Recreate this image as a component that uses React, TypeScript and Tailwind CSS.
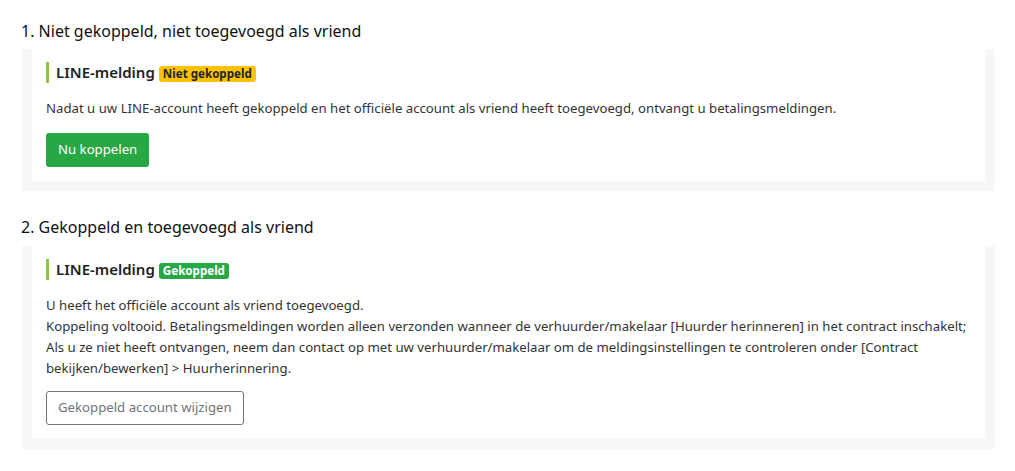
import React from "react";

const font = { fontFamily: '"Segoe UI", "Noto Sans", sans-serif' };

function Heading({ badge, variant }: { badge: string; variant: "warn" | "ok" }) {
  return (
    <div className="flex items-center h-[21px] border-l-[3px] border-[#8dc63f] pl-[7px]">
      <span className="text-[15px] font-semibold text-[#222]">LINE-melding</span>
      <span
        className={
          "ml-[4px] mt-[2px] rounded-[3px] px-[4px] h-[16px] leading-[16px] text-[11.6px] font-bold " +
          (variant === "warn" ? "bg-[#ffc107] text-[#212529]" : "bg-[#28a745] text-white")
        }
      >
        {badge}
      </span>
    </div>
  );
}

export default function App() {
  return (
    <div className="bg-white w-[1015px] h-[471px] pl-[21px] pr-[20px] pt-[19px] text-[#222]" style={font}>
      <h2 className="text-[16px] leading-[24px] text-[#111] mb-[6px]">1. Niet gekoppeld, niet toegevoegd als vriend</h2>
      <div className="bg-[#f7f7f7] pl-[10px] pr-[10px] pb-[10px] ml-px mt-px">
        <div className="bg-white pl-[14px] pt-[13px] pb-[14px]">
          <Heading badge="Niet gekoppeld" variant="warn" />
          <p className="text-[13.2px] leading-[21px] mt-[15px] text-[#333]">
            Nadat u uw LINE-account heeft gekoppeld en het officiële account als vriend heeft toegevoegd, ontvangt u betalingsmeldingen.
          </p>
          <button className="mt-[14px] h-[34px] px-[12px] rounded-[3px] bg-[#28a745] text-white text-[13.2px]">
            Nu koppelen
          </button>
        </div>
      </div>

      <h2 className="text-[16px] leading-[24px] text-[#111] mt-[24px] mb-[7px]">2. Gekoppeld en toegevoegd als vriend</h2>
      <div className="bg-[#f7f7f7] pl-[10px] pr-[10px] pb-[10px] ml-px">
        <div className="bg-white pl-[14px] pt-[13px] pb-[14px]">
          <Heading badge="Gekoppeld" variant="ok" />
          <div className="text-[13.2px] leading-[21px] mt-[15px] text-[#333]">
            <p>U heeft het officiële account als vriend toegevoegd.</p>
            <p>
              Koppeling voltooid. Betalingsmeldingen worden alleen verzonden wanneer de verhuurder/makelaar [Huurder herinneren] in het contract inschakelt;
            </p>
            <p className="pr-[20px]">
              Als u ze niet heeft ontvangen, neem dan contact op met uw verhuurder/makelaar om de meldingsinstellingen te controleren onder [Contract bekijken/bewerken] &gt; Huurherinnering.
            </p>
          </div>
          <button className="mt-[12px] h-[34px] px-[11px] rounded-[3px] border border-[#6c757d] bg-white text-[#6c757d] text-[13.2px]">
            Gekoppeld account wijzigen
          </button>
        </div>
      </div>
    </div>
  );
}
